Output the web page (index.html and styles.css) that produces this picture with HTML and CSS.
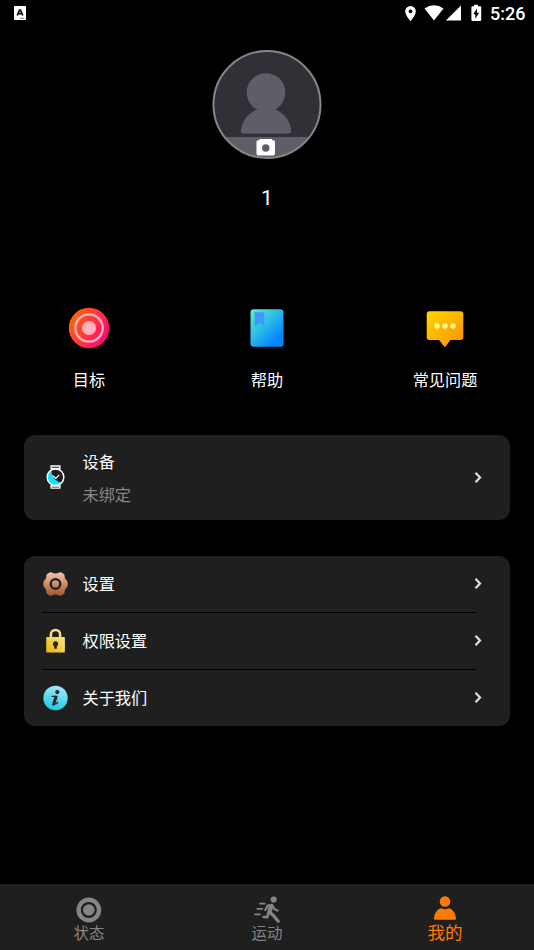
FILE: index.html
```html
<!DOCTYPE html>
<html lang="zh-CN">
<head>
<meta charset="utf-8">
<title>我的</title>
<link rel="stylesheet" href="styles.css">
</head>
<body>
<div class="screen">
  <header class="status">
    <svg class="status-app" width="12" height="14" viewBox="0 0 12 14"><rect width="12" height="14" rx="1" fill="#fff"/><path d="M3.200 9.500 5.500 4h1l2.300 5.500M4.200 7.700h3.600" fill="none" stroke="#111" stroke-width="1.700"/><path d="M6 12.300h4.500" stroke="#555" stroke-width=".8"/></svg>
    <div class="status-right">
      <svg width="86" height="28" viewBox="404 0 86 28">
        <path fill="#fff" fill-rule="evenodd" d="M410.500 6a5.300 5.300 0 0 0-5.300 5.300c0 3.900 5.300 10 5.300 10s5.300-6.100 5.300-10a5.300 5.300 0 0 0-5.300-5.300zm0 3.400a1.900 1.900 0 1 1 0 3.800 1.900 1.900 0 0 1 0-3.800z"/>
        <path fill="#fff" d="M424.500 8.500q9.500-6.700 19 0L434 20.500zM445.800 20.500H461V5.500z"/>
        <path fill="#fff" fill-rule="evenodd" d="M472.300 6.300h1.700V4.800h4v1.500h2.400q.8 0 .8.800v13q0 .8-.8.800h-8.100q-.9 0-.9-.8v-13q0-.8.900-.8zM477 8.500l-3.700 5.800h2v4.400l3.800-6h-2.100z"/>
      </svg>
      <span class="clock">5:26</span>
    </div>
  </header>

  <section class="profile">
    <svg class="avatar" width="110" height="110" viewBox="212 49 110 110">
      <defs><clipPath id="face"><circle cx="267" cy="104.500" r="53.500"/></clipPath></defs>
      <g clip-path="url(#face)">
        <path fill="#303037" d="M212 49h110v111H212z"/>
        <path fill="#5d5e68" d="M212 137h110v23H212z"/>
      </g>
      <g fill="#5d5e68">
        <circle cx="266" cy="92.500" r="19.300"/>
        <path d="M243.500 133.500q-3 0-2.700-2.800C242.500 117 253 108 266 108s23.500 9 25.300 22.700q.2 2.800-2.700 2.800z"/>
      </g>
      <circle cx="267" cy="104.500" r="53.500" fill="none" stroke="#858585" stroke-width="2"/>
      <path fill="#fff" fill-rule="evenodd" d="M260.500 139h10.500q1 0 1.500 1.300h.8q1.700 0 1.700 1.700v11.500q0 1.900-1.900 1.900h-14.700q-1.900 0-1.900-1.900V142q0-1.700 1.700-1.700h.8q.5-1.300 1.500-1.300zm5.300 5.300a3.700 3.700 0 1 0 0 7.400 3.700 3.700 0 0 0 0-7.400z"/>
    </svg>
    <div class="name">1</div>
  </section>

  <section class="shortcuts">
    <div class="shortcut">
      <svg width="42" height="42" viewBox="0 0 42 42">
        <defs><linearGradient id="goal" x1="0" y1="0.200" x2="1" y2=".8"><stop offset="0" stop-color="#ff6a00"/><stop offset="1" stop-color="#ff0080"/></linearGradient></defs>
        <circle cx="21" cy="21" r="20.200" fill="url(#goal)"/><circle cx="21" cy="21" r="13.700" fill="none" stroke="#ffb3bd" stroke-width="2.300"/><circle cx="21" cy="21" r="7" fill="#ffb3bd"/>
      </svg>
      <span>目标</span>
    </div>
    <div class="shortcut">
      <svg width="42" height="42" viewBox="0 0 42 42">
        <defs><linearGradient id="book" x1="0" y1="0" x2=".9" y2="1"><stop offset="0" stop-color="#5df2c8"/><stop offset=".45" stop-color="#2cbce8"/><stop offset=".85" stop-color="#0485ff"/></linearGradient></defs>
        <rect x="4.500" y="2.200" width="33" height="37.600" rx="3" fill="url(#book)"/><path d="M8.700 5.300h9.600V20l-4.800-4.300L8.700 20z" fill="#4398ff"/>
      </svg>
      <span>帮助</span>
    </div>
    <div class="shortcut">
      <svg width="42" height="42" viewBox="0 0 42 42">
        <defs><linearGradient id="chat" x1="0" y1="0" x2="1" y2="1"><stop offset="0" stop-color="#ffd500"/><stop offset="1" stop-color="#ff9000"/></linearGradient></defs>
        <path fill="url(#chat)" d="M5.500 4.200h31q2.800 0 2.800 2.800v23.300q0 2.700-2.800 2.700H26.500l-5 6.500q-.7.700-1.400 0l-5-6.500H5.500q-2.800 0-2.800-2.700V7q0-2.800 2.800-2.800z"/>
        <g fill="#fff59b"><circle cx="13" cy="19" r="2.700"/><circle cx="21" cy="19" r="2.700"/><circle cx="29" cy="19" r="2.700"/></g>
      </svg>
      <span>常见问题</span>
    </div>
  </section>

  <section class="card device">
    <svg class="icon" width="26" height="26" viewBox="0.500 1 26 26">
      <g fill="none" stroke="#fff" stroke-width="1.300"><path d="M8.600 5.800V2h8.800v3.800M8.600 20.500v3.700h8.800v-3.700M8.600 4.500h8.800M8.600 22h8.800"/></g>
      <circle cx="13" cy="13.200" r="8.300" fill="#1d1d1d"/><path fill="#0be5fb" d="M9 6.300C8.500 12 12.500 17.500 19 18.600A8 8 0 1 1 9 6.300z"/>
      <circle cx="13" cy="13.200" r="8.300" fill="none" stroke="#fff" stroke-width="1.500"/><path d="m10 11.500 3.300 3 3.500-3.700" fill="none" stroke="#fff" stroke-width="1.200"/>
    </svg>
    <div class="label">
      <div>设备</div>
      <div class="muted">未绑定</div>
    </div>
    <svg class="chevron" width="10" height="14" viewBox="0 0.500 10 14"><path d="m2.500 2.300 4.500 4.700-4.500 4.700"/></svg>
  </section>

  <section class="card menu">
    <div class="row">
      <svg class="icon" width="26" height="26" viewBox="0.500 0 26 26">
        <defs><linearGradient id="gear" x1="0" y1="0" x2="0" y2="1"><stop offset="0" stop-color="#efc0a8"/><stop offset="1" stop-color="#a95730"/></linearGradient></defs>
        <path fill="url(#gear)" stroke="url(#gear)" stroke-width="2" stroke-linejoin="round" d="M8 2.200 10.400 3Q13 3.800 15.600 3L18 2.200 20.800 3.800 21.400 6.700Q22 8.800 23.500 10.200L24.200 11.500V14.500L23.500 15.800Q22 17.200 21.400 19.300L20.800 22.200 18 23.800 15.600 23Q13 22.200 10.400 23L8 23.800 5.200 22.200 4.600 19.300Q4 17.200 2.500 15.800L1.800 14.500V11.500L2.500 10.200Q4 8.800 4.600 6.700L5.200 3.800z"/>
        <circle cx="13" cy="13" r="4.800" fill="none" stroke="#1f1f1f" stroke-width="2.300"/>
      </svg>
      <span class="label">设置</span>
      <svg class="chevron" width="10" height="14" viewBox="0 0.500 10 14"><path d="m2.500 2.300 4.500 4.700-4.500 4.700"/></svg>
    </div>
    <div class="divider"></div>
    <div class="row">
      <svg class="icon" width="26" height="26" viewBox="0.500 0 26 26">
        <defs><linearGradient id="lock" x1="1" y1="0" x2="0" y2="1"><stop offset="0" stop-color="#fbe58e"/><stop offset="1" stop-color="#efb400"/></linearGradient></defs>
        <path d="M8.400 10V6.500a4.600 4.600 0 0 1 9.200 0V10" fill="none" stroke="#f5df86" stroke-width="2.500"/><rect x="3.700" y="9" width="18.700" height="15.600" rx=".8" fill="url(#lock)"/><path fill="#2b2517" d="M13 13.300a2.600 2.600 0 0 1 1.300 4.900v2.600h-2.600v-2.600a2.600 2.600 0 0 1 1.300-4.900z"/>
      </svg>
      <span class="label">权限设置</span>
      <svg class="chevron" width="10" height="14" viewBox="0 0.500 10 14"><path d="m2.500 2.300 4.500 4.700-4.500 4.700"/></svg>
    </div>
    <div class="divider"></div>
    <div class="row">
      <svg class="icon" width="26" height="26" viewBox="0.500 0 26 26">
        <defs><linearGradient id="info" x1=".6" y1="0" x2=".4" y2="1"><stop offset="0" stop-color="#a5e8f7"/><stop offset="1" stop-color="#19cbe4"/></linearGradient></defs>
        <circle cx="13" cy="13" r="12.200" fill="url(#info)"/><circle cx="14.800" cy="7.100" r="2.100" fill="#1f2930"/><path d="M9 11.400h5.400M9.500 19.300q3 .8 6.200-2" fill="none" stroke="#1f2930" stroke-width="1.300"/><path d="m13.800 10.900-2.300 7.300q-.2 1.200.5 1.500" fill="none" stroke="#1f2930" stroke-width="3"/>
      </svg>
      <span class="label">关于我们</span>
      <svg class="chevron" width="10" height="14" viewBox="0 0.500 10 14"><path d="m2.500 2.300 4.500 4.700-4.500 4.700"/></svg>
    </div>
  </section>

  <nav class="tabs">
    <div class="tab">
      <svg width="28" height="28" viewBox="0 0 28 28"><circle cx="13.800" cy="14" r="10.200" fill="none" stroke="#858585" stroke-width="4.400"/><circle cx="13.800" cy="14" r="5.800" fill="#858585"/></svg>
      <span>状态</span>
    </div>
    <div class="tab">
      <svg width="28" height="28" viewBox="0 0 28 28" fill="none" stroke="#858585" stroke-linecap="round" stroke-linejoin="round">
        <circle cx="20.700" cy="3.500" r="3.100" fill="#858585" stroke="none"/><path stroke-width="1.700" d="M7 7.700h4.800M4.300 12.900h5M2 18.300h5"/><path stroke-width="2.200" d="m12.300 14 2.300-4.500 4.400-.6 2.600 4.300 3 1.300"/><path stroke-width="4.600" d="m17.800 10.500-1.200 5.500"/><path stroke-width="3.200" d="m17 16.500 4 3.700 4.200 5"/><path stroke-width="2.700" d="m15.500 17-1.300 4.200-3.500-.2"/>
      </svg>
      <span>运动</span>
    </div>
    <div class="tab active">
      <svg width="28" height="28" viewBox="0 0 28 28" fill="#ff7a00"><circle cx="14" cy="5.500" r="5.300"/><path d="M4.200 23.700q-1.200 0-1.200-1.200c.5-6 4-10 7.500-10.200Q14 14 17.500 12.300C21 12.500 24.500 16.500 25 22.500q0 1.200-1.200 1.200z"/></svg>
      <span>我的</span>
    </div>
  </nav>
</div>
</body>
</html>
```
FILE: styles.css
```css
* {
  box-sizing: border-box;
}

body {
  margin: 0;
  background: #000;
  color: #fff;
  font: 16.200px/24px Roboto, "Noto Sans CJK SC", sans-serif;
}

svg {
  display: block;
  flex: none;
}

.screen {
  display: flex;
  flex-direction: column;
  width: 534px;
  height: 950px;
}

.status {
  display: flex;
  justify-content: space-between;
  height: 28px;
  padding-left: 14px;
}

.status-app {
  margin-top: 6px;
}

.status-right {
  display: flex;
  width: 130px;
}

.clock {
  font-size: 18px;
  font-weight: 500;
  line-height: 28px;
}

.profile {
  display: flex;
  flex-direction: column;
  align-items: center;
  height: 278px;
  padding-top: 21px;
}

.name {
  margin-top: 25px;
  font-size: 21px;
  line-height: 28px;
}

.shortcuts {
  display: grid;
  grid-template-columns: repeat(3, 1fr);
  height: 129px;
  padding-top: 1px;
}

.shortcut {
  display: flex;
  flex-direction: column;
  align-items: center;
  gap: 20px;
}

.card {
  margin: 0 24.400px;
  border-radius: 11px;
  background: #1f1f1f;
}

.device {
  display: flex;
  align-items: center;
  height: 85px;
  padding: 0 26.600px 0 18.600px;
}

.icon {
  margin-right: 13.500px;
}

.label {
  flex: 1;
  padding-top: 2px;
}

.row .label {
  padding-top: 3px;
}

.device .label {
  line-height: 33px;
}

.muted {
  color: #858585;
}

.chevron {
  fill: none;
  stroke: #dedede;
  stroke-width: 2.200;
}

.menu {
  height: 169.500px;
  margin-top: 36px;
}

.row {
  display: flex;
  align-items: center;
  height: 55.500px;
  padding: 0 26.600px 0 18.600px;
}

.divider {
  height: 1.500px;
  margin: 0 33.600px 0 17.600px;
  background: #000;
}

.tabs {
  display: grid;
  grid-template-columns: repeat(3, 1fr);
  height: 66px;
  margin-top: auto;
  background: #1f1f1f;
  color: #858585;
}

.tab {
  display: flex;
  flex-direction: column;
  align-items: center;
  padding-top: 12px;
  font-size: 15.500px;
  line-height: 20px;
}

.active {
  color: #ff7a00;
  font-size: 17.500px;
  line-height: 18px;
}
```
